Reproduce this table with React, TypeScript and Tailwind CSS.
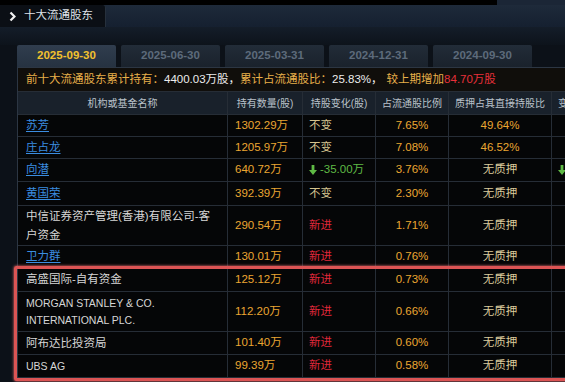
import type { ReactNode } from 'react';

type Change = 'same' | 'new' | 'down';

interface Holder {
  name: string;
  link?: boolean;
  en?: boolean;
  qty: string;
  change: Change;
  delta?: string;
  ratio: string;
  pledge: string;
  h: string;
  extra?: boolean;
}

const tabs = ['2025-09-30', '2025-06-30', '2025-03-31', '2024-12-31', '2024-09-30'];

const holders: Holder[] = [
  { name: '苏芳', link: true, qty: '1302.29万', change: 'same', ratio: '7.65%', pledge: '49.64%', h: 'h-[22px]' },
  { name: '庄占龙', link: true, qty: '1205.97万', change: 'same', ratio: '7.08%', pledge: '46.52%', h: 'h-[22px]' },
  { name: '向潜', link: true, qty: '640.72万', change: 'down', delta: '-35.00万', ratio: '3.76%', pledge: '无质押', h: 'h-[23px]', extra: true },
  { name: '黄国荣', link: true, qty: '392.39万', change: 'same', ratio: '2.30%', pledge: '无质押', h: 'h-[24px]' },
  { name: '中信证券资产管理(香港)有限公司-客\n户资金', qty: '290.54万', change: 'new', ratio: '1.71%', pledge: '无质押', h: 'h-[40px]' },
  { name: '卫力群', link: true, qty: '130.01万', change: 'new', ratio: '0.76%', pledge: '无质押', h: 'h-[22px]' },
  { name: '高盛国际-自有资金', qty: '125.12万', change: 'new', ratio: '0.73%', pledge: '无质押', h: 'h-[24px]' },
  { name: 'MORGAN STANLEY & CO.\nINTERNATIONAL PLC.', en: true, qty: '112.20万', change: 'new', ratio: '0.66%', pledge: '无质押', h: 'h-[40px]' },
  { name: '阿布达比投资局', qty: '101.40万', change: 'new', ratio: '0.60%', pledge: '无质押', h: 'h-[23px]' },
  { name: 'UBS AG', en: true, qty: '99.39万', change: 'new', ratio: '0.58%', pledge: '无质押', h: 'h-[23px]' },
];

function DownArrow() {
  return (
    <svg width="8" height="10" viewBox="0 0 8 10" className="shrink-0">
      <path d="M2.6 0h2.8v5H8L4 10 0 5h2.6z" fill="#5fba45" />
    </svg>
  );
}

function Cell({ w, className = '', children }: { w: string; className?: string; children?: ReactNode }) {
  return (
    <div className={`${w} shrink-0 h-full flex items-center border-r border-[#262d36] ${className}`}>
      {children}
    </div>
  );
}

function ChangeText({ h }: { h: Holder }) {
  if (h.change === 'same') return <span className="text-[#d4c38e]">不变</span>;
  if (h.change === 'new') return <span className="text-[#e0283a]">新进</span>;
  return (
    <span className="flex items-center gap-[3px] text-[#5fba45]">
      <DownArrow />
      {h.delta}
    </span>
  );
}

export default function App() {
  return (
    <div className="w-[565px] h-[382px] overflow-hidden bg-[#0c1118] font-['Liberation_Sans','Noto_Sans_CJK_SC',sans-serif] text-[11.5px]">
      <div className="flex h-[5px]">
        <div className="w-[497px] bg-black" />
        <div className="flex-1 bg-[#1b2636]" />
      </div>

      <div className="flex h-[22px] bg-gradient-to-b from-[#1e2a3a] to-[#152030]">
        <div className="w-[106px] flex items-center gap-[8px] pl-[9px] bg-[#0b0f15] rounded-tr-[3px] border-r border-[#26303c]">
          <svg width="7" height="11" viewBox="0 0 7 11">
            <path d="M1.5 1.5l4 4-4 4" stroke="#f2f2f2" strokeWidth="2.2" fill="none" />
          </svg>
          <span className="text-[11.5px] text-[#dfe3e8]">十大流通股东</span>
        </div>
      </div>

      <div className="h-[18px] bg-gradient-to-b from-[#141d29] to-[#0d131b]" />

      <div className="flex items-end h-[22px] pl-[17px] gap-[5px]">
        {tabs.map((t, i) => (
          <div
            key={t}
            className={`w-[99px] h-full flex items-center justify-center rounded-t-[2px] text-[11.5px] font-bold ${
              i === 0
                ? 'bg-gradient-to-b from-[#303d4e] to-[#263241] text-[#f2c12e]'
                : 'bg-gradient-to-b from-[#222c38] to-[#1a222c] text-[#5d6b7b]'
            }`}
          >
            {t}
          </div>
        ))}
      </div>

      <div className="relative ml-[17px] border-l border-t border-[#2c3643] bg-[#050607]">
        <div className="h-[24px] flex items-center pl-[8px] bg-[#100e0b] border-b border-[#262d36] whitespace-nowrap">
          <span className="text-[#e8b04a]">前十大流通股东累计持有：</span>
          <span className="text-[#ececec]">4400.03万股，</span>
          <span className="text-[#e8b04a]">累计占流通股比：</span>
          <span className="text-[#ececec]">25.83%，</span>
          <span className="text-[#e8b04a] ml-[4px]">较上期增加</span>
          <span className="text-[#e8303a]">84.70万股</span>
        </div>

        <div className="flex h-[23px] bg-[#19212b] border-b border-[#262d36] text-[10px] text-[#b9c1ca] whitespace-nowrap">
          <Cell w="w-[210px]" className="justify-center">机构或基金名称</Cell>
          <Cell w="w-[75px]" className="justify-center">持有数量(股)</Cell>
          <Cell w="w-[73px]" className="justify-center">持股变化(股)</Cell>
          <Cell w="w-[73px]" className="justify-center">占流通股比例</Cell>
          <Cell w="w-[103px]" className="justify-center">质押占其直接持股比</Cell>
          <Cell w="w-[110px]" className="pl-[6px]">变动</Cell>
        </div>

        {holders.map((h) => (
          <div key={h.name} className={`flex ${h.h} border-b border-[#262d36] whitespace-nowrap`}>
            <Cell w="w-[210px]" className="pl-[8px]">
              {h.link ? (
                <span className="text-[#3b8de0] underline underline-offset-2">{h.name}</span>
              ) : (
                <span
                  className={`whitespace-pre-line text-[#d6d6d6] ${
                    h.en ? 'text-[10.5px] font-medium leading-[17px]' : 'leading-[19px]'
                  }`}
                >
                  {h.name}
                </span>
              )}
            </Cell>
            <Cell w="w-[75px]" className="pl-[7px] text-[#eba632]">{h.qty}</Cell>
            <Cell w="w-[73px]" className="pl-[6px]">
              <ChangeText h={h} />
            </Cell>
            <Cell w="w-[73px]" className="justify-center text-[#eba632]">{h.ratio}</Cell>
            <Cell
              w="w-[103px]"
              className={`justify-center ${h.pledge === '无质押' ? 'text-[#dccb9c]' : 'text-[#eba632]'}`}
            >
              {h.pledge}
            </Cell>
            <Cell w="w-[110px]" className="pl-[6px]">
              {h.extra && <DownArrow />}
            </Cell>
          </div>
        ))}

        <div className="absolute left-[-4px] top-[198px] w-[570px] h-[115px] border-[3px] border-[#dc5454] rounded-[2px] shadow-[0_0_3px_#ff7a7a]" />
      </div>
    </div>
  );
}
